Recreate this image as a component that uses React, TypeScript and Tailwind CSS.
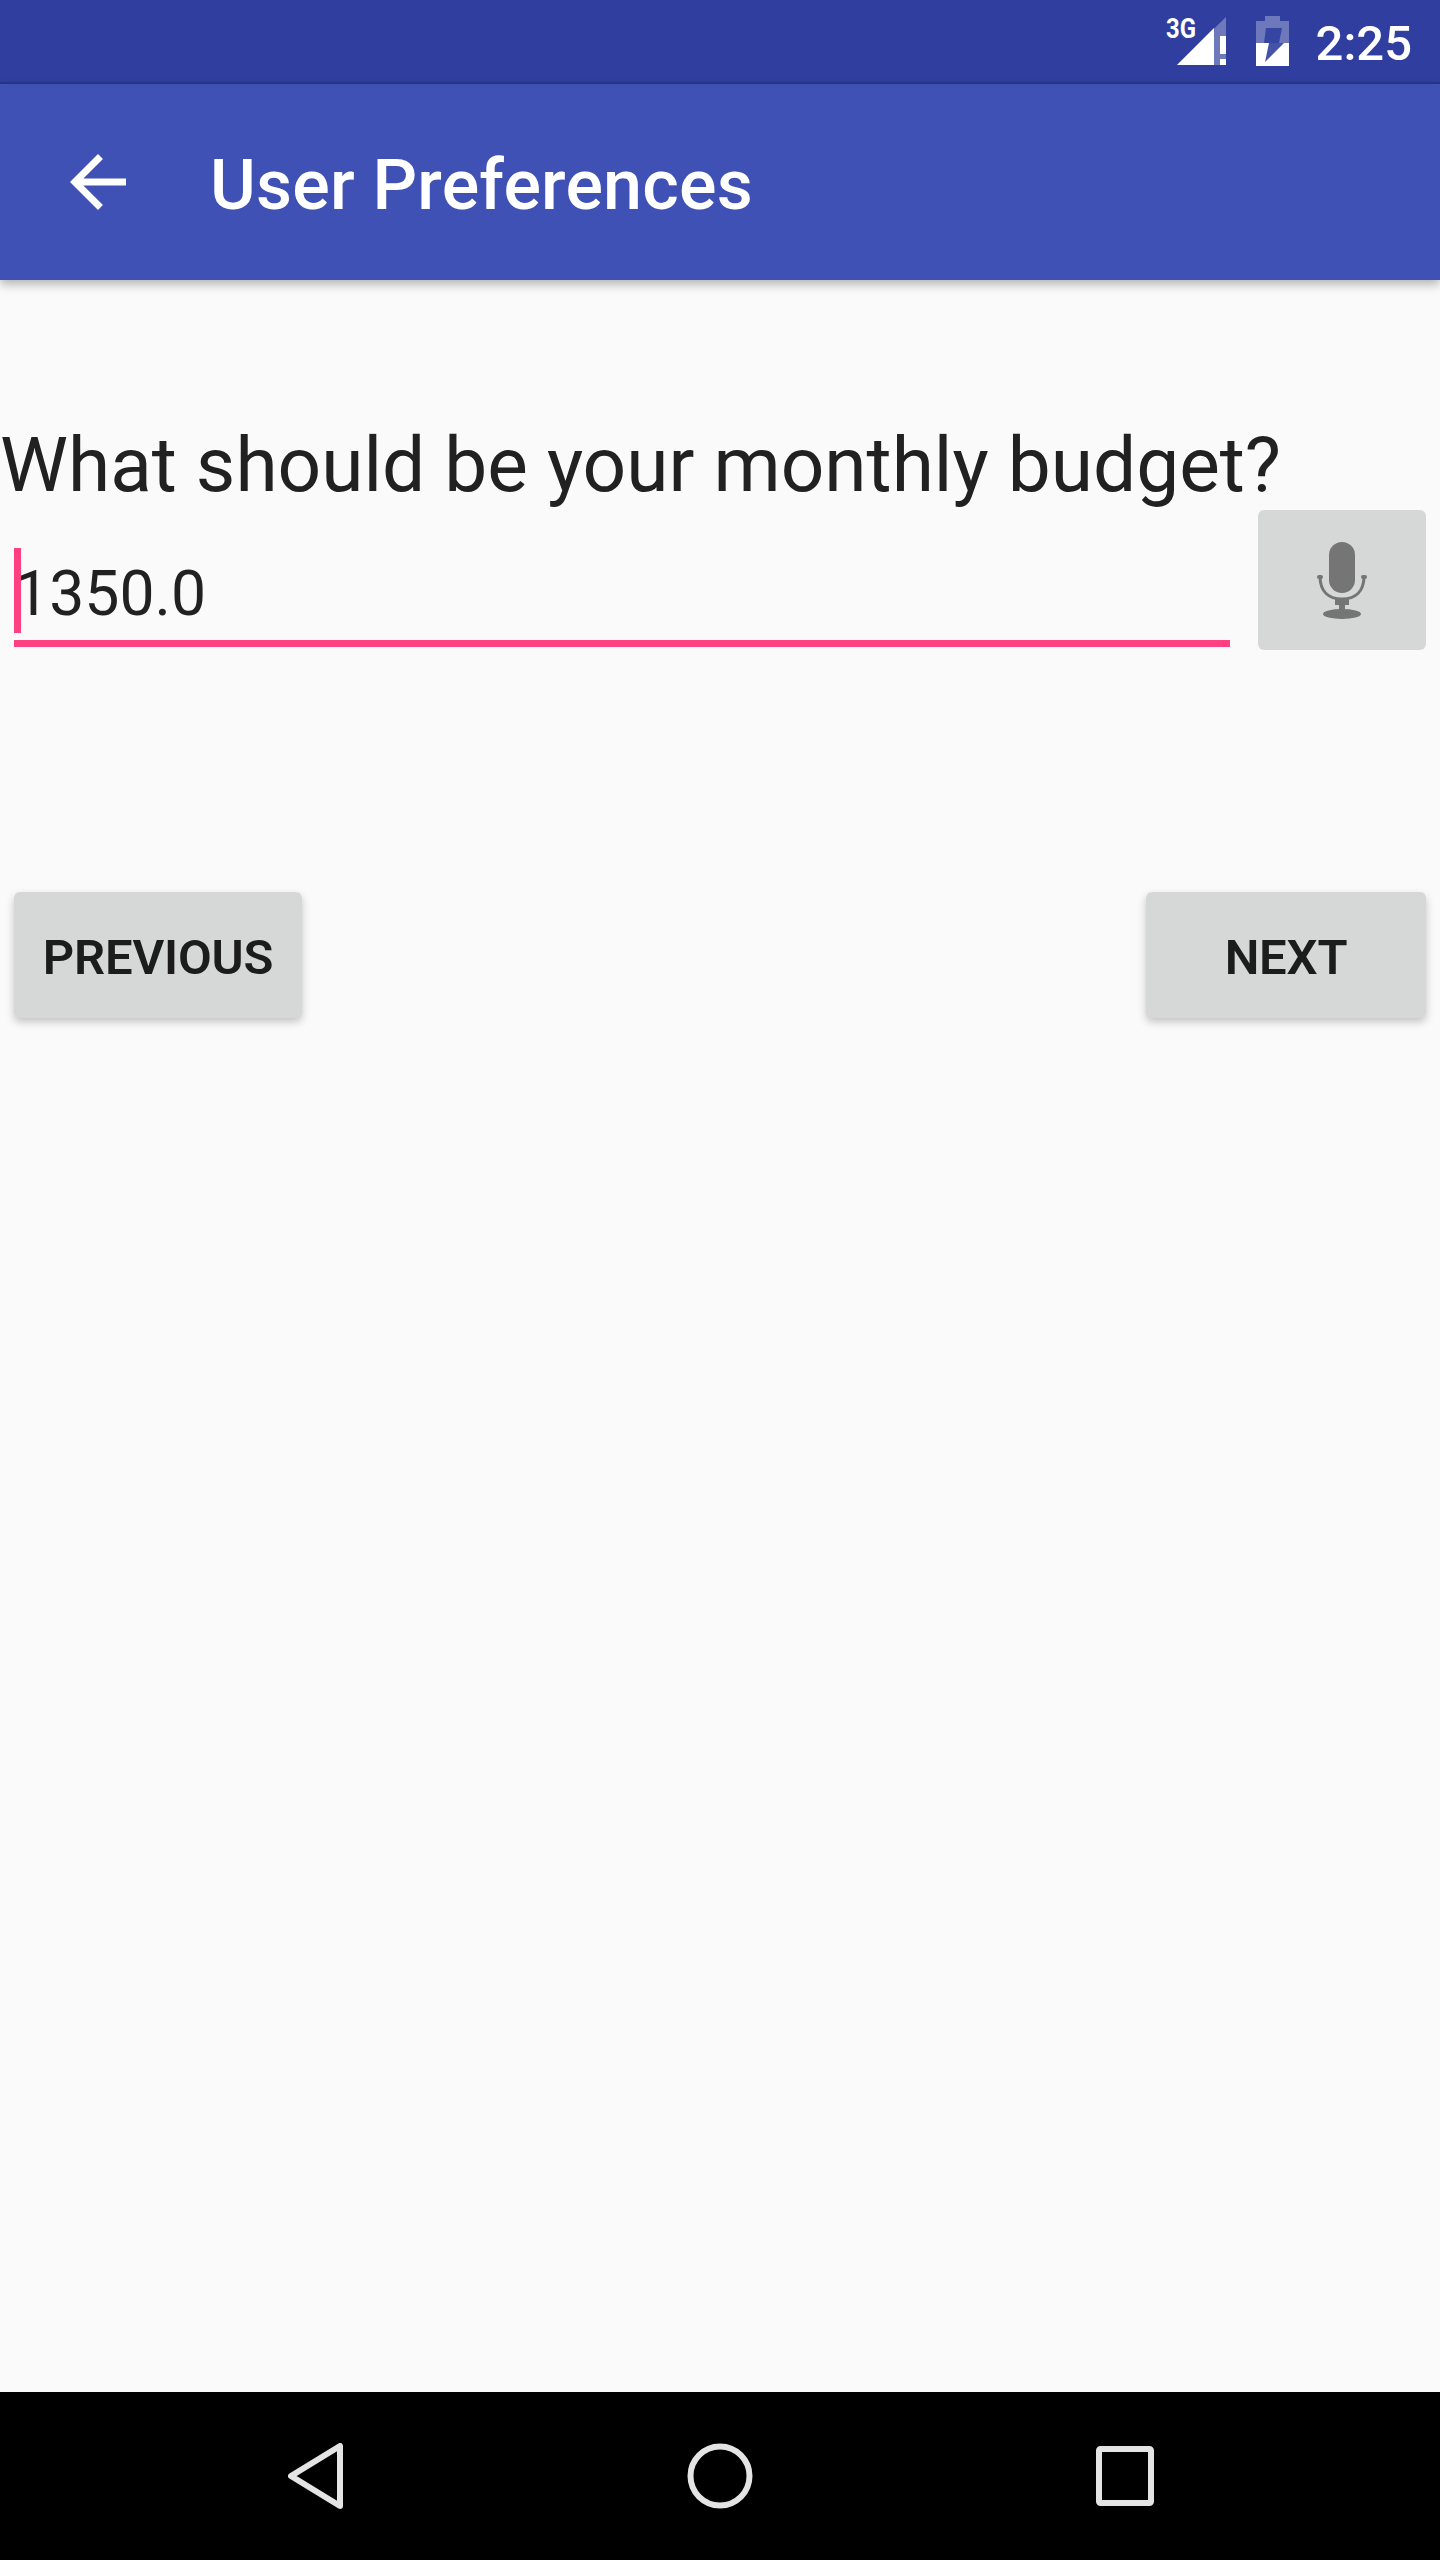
const ROBOTO = "font-['Roboto',sans-serif]";

function StatusBar() {
  return (
    <div className="h-[84px] bg-[#303f9f] border-b-2 border-[#2a3688] flex items-start justify-end">
      {/* signal */}
      <svg width="64" height="68" viewBox="0 -16 64 68" className="mr-[30px]">
        <text x="4" y="22" fontSize="28" fontWeight="700" fill="#fff" fontFamily="Roboto, sans-serif" textLength="30" lengthAdjust="spacingAndGlyphs">3G</text>
        <path d="M64 1 L64 49 L15 49 Z" fill="#fff" fillOpacity="0.3" />
        <path d="M15 49 L52 12 L52 49 Z" fill="#fff" />
        <rect x="58" y="20" width="6" height="18" fill="#fff" />
        <rect x="58" y="43" width="6" height="6" fill="#fff" />
      </svg>
      {/* battery */}
      <svg width="33" height="50" viewBox="0 0 33 50" className="mt-[16px] mr-[27px]">
        <path d="M0 5 H9 V0 H24 V5 H33 V50 H0 Z" fill="#fff" fillOpacity="0.3" />
        <path d="M0 27 H33 V50 H0 Z" fill="#fff" />
        <path d="M10 12 H26 L23 27 H28 L9 46 L13 27 H8 Z" fill="#303f9f" fillOpacity="0.9" />
      </svg>
      <span className={`${ROBOTO} text-[49px] leading-[84px] text-white mr-[28px] font-medium mt-[2px]`}>2:25</span>
    </div>
  );
}

function Toolbar() {
  return (
    <div className="h-[196px] bg-[#3f51b5] flex items-center shadow-[0_4px_10px_rgba(0,0,0,0.3)] relative">
      <svg width="84" height="84" viewBox="0 0 24 24" className="ml-[56px]">
        <path d="M20 11H7.83l5.59-5.59L12 4l-8 8 8 8 1.41-1.41L7.83 13H20v-2z" fill="#fff" />
      </svg>
      <span className={`${ROBOTO} ml-[70px] pt-[6px] text-[70px] tracking-[0.2px] font-medium text-white`}>User Preferences</span>
    </div>
  );
}

function MicIcon() {
  return (
    <svg width="50" height="78" viewBox="0 0 50 78" className="mt-[2px]">
      <rect x="12" y="0" width="26" height="51" rx="13" fill="#757575" />
      <path d="M3 34 C3 50 12 57 25 57 C38 57 47 50 47 34" fill="none" stroke="#757575" strokeWidth="3" />
      <rect x="0" y="33" width="6" height="4" rx="2" fill="#757575" />
      <rect x="44" y="33" width="6" height="4" rx="2" fill="#757575" />
      <path d="M18 57 H32 V63 H28 V68 H22 V63 H18 Z" fill="#757575" />
      <ellipse cx="25" cy="72" rx="19" ry="5" fill="#757575" />
    </svg>
  );
}

function RaisedButton({ label, width }: { label: string; width: string }) {
  return (
    <button className={`${ROBOTO} ${width} h-[126px] pt-[6px] rounded-[6px] bg-[#d6d7d7] text-[49px] font-semibold tracking-[-0.2px] text-[#1c1c1c] shadow-[0_4px_8px_rgba(0,0,0,0.22)]`}>
      {label}
    </button>
  );
}

function NavBar() {
  return (
    <div className="h-[168px] bg-black flex items-start pt-[51px] pl-[288px]">
      <svg width="56" height="66" viewBox="0 0 56 66">
        <path d="M52 3 V63 L3 33 Z" fill="none" stroke="#e4e4e4" strokeWidth="6" strokeLinejoin="round" />
      </svg>
      <svg width="66" height="66" viewBox="0 0 66 66" className="ml-[343px]">
        <circle cx="33" cy="33" r="29.5" fill="none" stroke="#e4e4e4" strokeWidth="6" />
      </svg>
      <svg width="58" height="60" viewBox="0 0 58 60" className="ml-[343px] mt-[3px]">
        <rect x="3" y="3" width="52" height="54" rx="1.5" fill="none" stroke="#e4e4e4" strokeWidth="6" />
      </svg>
    </div>
  );
}

export default function App() {
  return (
    <div className="w-[1440px] h-[2560px] flex flex-col bg-[#fafafa]">
      <StatusBar />
      <Toolbar />
      <div className="flex-1 flex flex-col">
        <div className={`${ROBOTO} mt-[140px] h-[90px] text-[76.6px] leading-[90px] text-[#212121] whitespace-nowrap`}>
          What should be your monthly budget?
        </div>
        <div className="flex items-start pl-[14px] pr-[14px]">
          <div className="w-[1216px] h-[137px] border-b-[7px] border-[#ff4081] relative">
            <div className="absolute left-0 top-[38px] w-[7px] h-[85px] bg-[#ff4081]" />
            <span className={`${ROBOTO} block pt-[47px] text-[62.5px] leading-[74px] text-[#212121]`}>1350.0</span>
          </div>
          <div className="ml-[28px] w-[168px] h-[140px] rounded-[6px] bg-[#d6d7d7] flex items-center justify-center">
            <MicIcon />
          </div>
        </div>
        <div className="flex justify-between mt-[242px] px-[14px]">
          <RaisedButton label="PREVIOUS" width="w-[288px]" />
          <RaisedButton label="NEXT" width="w-[280px]" />
        </div>
      </div>
      <NavBar />
    </div>
  );
}
